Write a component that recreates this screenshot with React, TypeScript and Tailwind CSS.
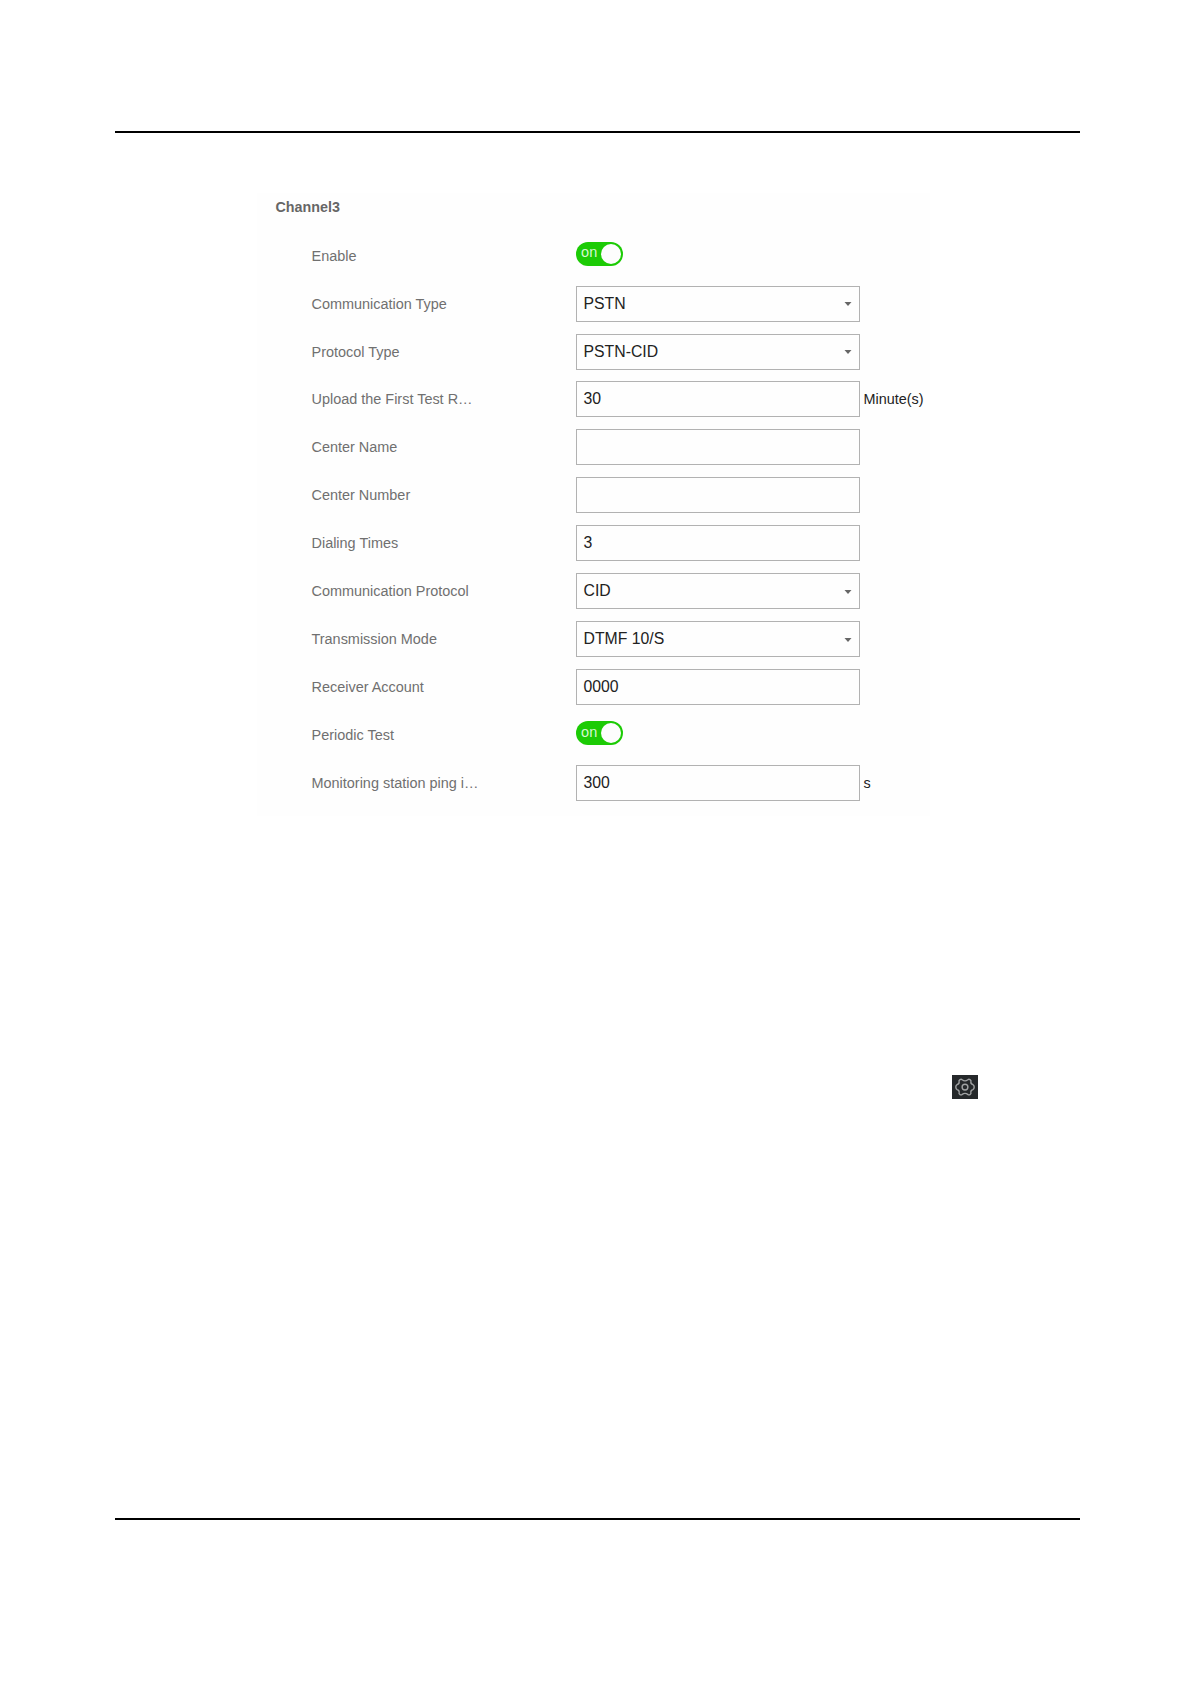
interface FieldRow {
  label: string;
  type: 'switch' | 'select' | 'input';
  value?: string;
  unit?: string;
}

const rows: FieldRow[] = [
  { label: 'Enable', type: 'switch' },
  { label: 'Communication Type', type: 'select', value: 'PSTN' },
  { label: 'Protocol Type', type: 'select', value: 'PSTN-CID' },
  { label: 'Upload the First Test R…', type: 'input', value: '30', unit: 'Minute(s)' },
  { label: 'Center Name', type: 'input', value: '' },
  { label: 'Center Number', type: 'input', value: '' },
  { label: 'Dialing Times', type: 'input', value: '3' },
  { label: 'Communication Protocol', type: 'select', value: 'CID' },
  { label: 'Transmission Mode', type: 'select', value: 'DTMF 10/S' },
  { label: 'Receiver Account', type: 'input', value: '0000' },
  { label: 'Periodic Test', type: 'switch' },
  { label: 'Monitoring station ping i…', type: 'input', value: '300', unit: 's' },
];

function Switch() {
  return (
    <div className="mb-1 flex h-6 w-[47px] items-center justify-between rounded-full bg-[#1ccb05] pl-[5.5px] pr-[2px]">
      <span className="-mt-[2px] text-[14.5px] leading-none tracking-[0.3px] text-[#d5f8d0]">on</span>
      <span className="size-5 rounded-full bg-[#fdfdfd]" />
    </div>
  );
}

function Box({ row }: { row: FieldRow }) {
  return (
    <div className="flex h-9 w-[284px] items-center justify-between border border-[#b2b2b2] bg-[#fefefe] pl-[7px] pr-[7px]">
      <span className="text-[15.8px] leading-5 text-[#222]">{row.value}</span>
      {row.type === 'select' && (
        <svg width="8" height="4" viewBox="0 0 8 4" className="mt-px">
          <path d="M0.5 0h7L4 4z" fill="#666" />
        </svg>
      )}
    </div>
  );
}

function GearIcon() {
  return (
    <svg width="26" height="24" viewBox="0 0 26 24" fill="none" stroke="#a0a2a3" strokeWidth="1.4">
      <rect width="26" height="24" fill="#25282a" stroke="none" />
      <path
        strokeLinejoin="round"
        d="M8 4.6Q9.2 3.9 10.2 4.8Q13 6.9 15.8 4.8Q16.8 3.9 18 4.6Q19.4 5.4 18.9 7Q18.6 8.9 20.9 9.6Q22.2 10.2 22.2 12.1Q22.2 14 20.9 14.6Q18.6 15.3 18.9 17.2Q19.4 18.8 18 19.6Q16.8 20.3 15.8 19.4Q13 17.3 10.2 19.4Q9.2 20.3 8 19.6Q6.6 18.8 7.1 17.2Q7.4 15.3 5.1 14.6Q3.8 14 3.8 12.1Q3.8 10.2 5.1 9.6Q7.4 8.9 7.1 7Q6.6 5.4 8 4.6Z"
      />
      <circle cx="13" cy="12.1" r="2.9" />
    </svg>
  );
}

export default function App() {
  return (
    <div className="flex h-[1685px] w-[1181px] flex-col bg-white px-[115px] font-['Liberation_Sans',Arial,sans-serif]">
      <div className="mt-[131px] h-0.5 w-[965px] shrink-0 bg-black" />

      {/* Channel settings */}
      <section className="ml-[142px] mt-[60px] h-[623px] w-[673px] shrink-0 bg-[#fefefe] pl-[18.5px] pt-[4px]">
        <h2 className="text-[14.3px] font-bold leading-5 text-[#666]">Channel3</h2>
        <div className="mt-[14.6px]">
          {rows.map((row) => (
            <div key={row.label} className="flex h-[47.98px] items-center">
              <div className="w-[264px] shrink-0 whitespace-nowrap pl-9 text-[14.45px] leading-5 text-[#707070]">
                {row.label}
              </div>
              <div className="ml-9 flex items-center">
                {row.type === 'switch' ? <Switch /> : <Box row={row} />}
                {row.unit && <span className="ml-1 text-[14.4px] leading-5 text-[#222]">{row.unit}</span>}
              </div>
            </div>
          ))}
        </div>
      </section>

      <div className="ml-[837px] mt-[259px] shrink-0">
        <GearIcon />
      </div>

      <div className="mb-[165px] mt-auto h-0.5 w-[965px] shrink-0 bg-black" />
    </div>
  );
}
